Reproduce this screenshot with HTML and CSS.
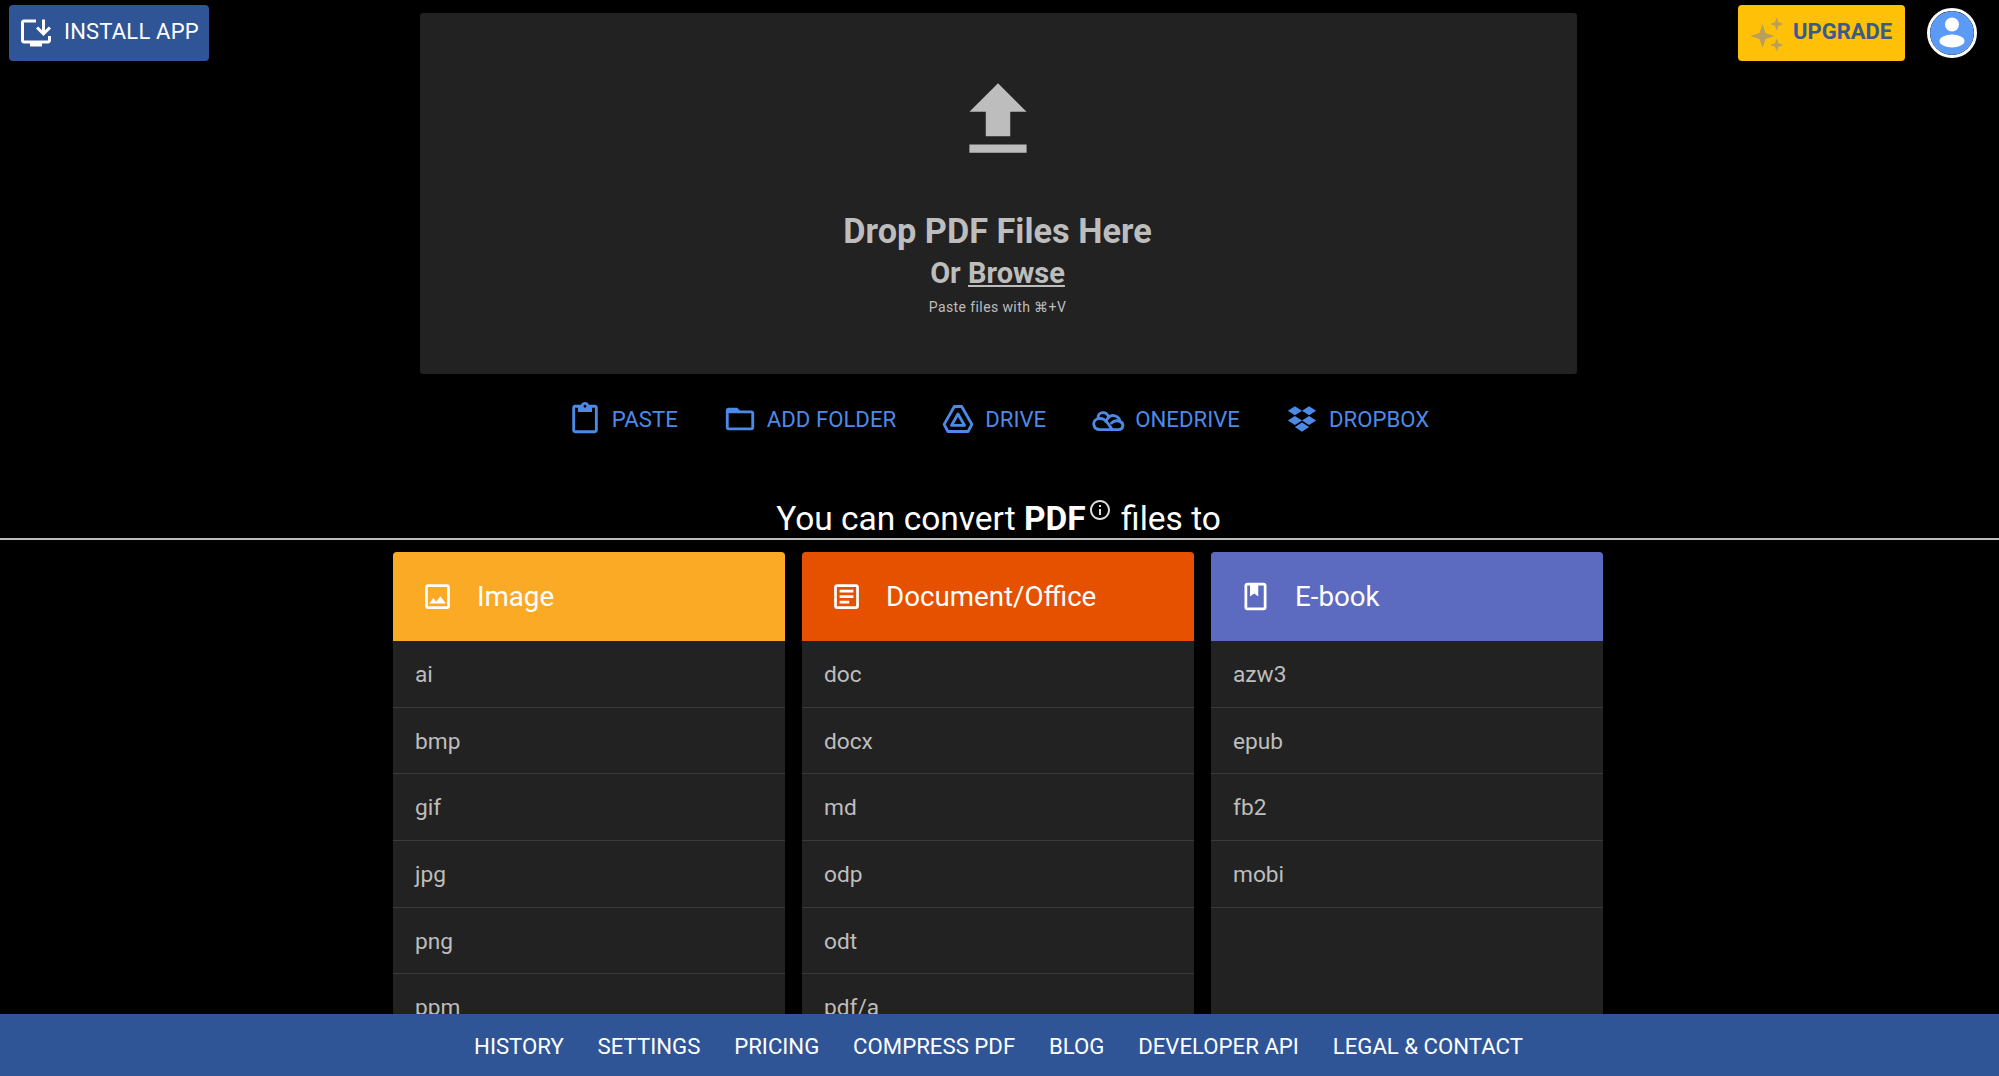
FILE: index.html
```html
<!DOCTYPE html>
<html lang="en">
<head>
    <meta charset="UTF-8">
    <meta name="viewport" content="width=device-width, initial-scale=1.0">
    <title>PDF Converter</title>
    <link rel="stylesheet" href="styles.css">
</head>
<body>
    <div class="top">
        <div class="top-left">
            <a class="btn install-btn">
                <svg class="btn-icon" viewBox="0 0 24 24"><path d="M20 17H4V5h8V3H4C2.89 3 2 3.89 2 5v12c0 1.1.89 2 2 2h4v2h8v-2h4c1.1 0 2-.9 2-2v-3h-2v3zM17 14l5-5-1.41-1.41L18 10.17V3h-2v7.17l-2.59-2.58L12 9l5 5z"/></svg>
                <span class="btn-label">INSTALL APP</span>
            </a>
        </div>
        <div class="dropzone">
            <svg class="upload-icon" viewBox="0 0 24 24"><path d="M9 16h6v-6h4l-7-7-7 7h4zm-4 2h14v2H5z"/></svg>
            <div class="drop-title">Drop PDF Files Here</div>
            <div class="drop-sub">Or <u>Browse</u></div>
            <div class="drop-hint">Paste files with ⌘+V</div>
        </div>
        <div class="top-right">
            <a class="btn upgrade-btn">
                <svg class="btn-icon spark" viewBox="0 0 24 24"><path d="M9 6l2 6 6 2-6 2-2 6-2-6-6-2 6-2zM18.500 1.500l1.200 3.300 3.300 1.200-3.300 1.200-1.200 3.300-1.200-3.300L14 6l3.300-1.200zM18.500 15.500l1.200 3.300 3.300 1.200-3.300 1.200-1.200 3.300-1.200-3.300L14 20l3.300-1.200z"/></svg>
                <span class="btn-label">UPGRADE</span>
            </a>
            <div class="avatar">
                <svg viewBox="0 0 44 44"><circle cx="22" cy="22" r="22" fill="#5b9bf5"/><circle cx="22" cy="13.500" r="7" fill="#fff"/><ellipse cx="22" cy="30" rx="12.500" ry="6.500" fill="#fff"/></svg>
            </div>
        </div>
    </div>

    <div class="sources">
        <a class="source">
            <svg viewBox="0 0 24 24"><path d="M19 2h-4.180C14.400.84 13.300 0 12 0c-1.300 0-2.400.84-2.820 2H5c-1.100 0-2 .9-2 2v16c0 1.100.9 2 2 2h14c1.100 0 2-.9 2-2V4c0-1.100-.9-2-2-2zm-7 0c.55 0 1 .45 1 1s-.45 1-1 1-1-.45-1-1 .45-1 1-1zm7 18H5V4h2v3h10V4h2v16z"/></svg>
            PASTE
        </a>
        <a class="source">
            <svg viewBox="0 0 24 24"><path d="M20 6h-8l-2-2H4c-1.100 0-1.990.9-1.990 2L2 18c0 1.100.9 2 2 2h16c1.100 0 2-.9 2-2V8c0-1.100-.9-2-2-2zm0 12H4V8h16v10z"/></svg>
            ADD FOLDER
        </a>
        <a class="source">
            <svg viewBox="0 0 24 24"><path class="line" d="M9.400 3.200h5.200L21.800 15.800l-2.700 5H4.900l-2.700-5zM12 8.500l-4.600 8h9.200z"/></svg>
            DRIVE
        </a>
        <a class="source">
            <svg viewBox="0 0 24 24"><path class="line" d="M6.500 19.500h13c3.200 0 4.200-4.600 1-5.700-.5-4-5.500-5.500-8-3C11 6 4.500 6.500 5 11.800c-4.500 1.200-4 7.700 1.500 7.700zM5 11.800c3-.6 5 .7 6.500 2.700l3.500 5M12.500 10.800c-1.200.9-1.700 2-2 3M20.500 13.800c-2.500-1-4.500-.5-6 1"/></svg>
            ONEDRIVE
        </a>
        <a class="source">
            <svg viewBox="0 0 24 24"><path d="M7 3l5 3.200-5 3.200-5-3.200zM17 3l5 3.200-5 3.200-5-3.200zM7 9.800L12 13l-5 3.200L2 13zM17 9.800l5 3.200-5 3.200-5-3.200zM12 14.500l5 3.200-5 3.300-5-3.300z"/></svg>
            DROPBOX
        </a>
    </div>

    <h2 class="convert-title">You can convert <b>PDF</b><svg class="info" viewBox="0 0 24 24"><path d="M11 7h2v2h-2zm0 4h2v6h-2zm1-9C6.480 2 2 6.480 2 12s4.480 10 10 10 10-4.480 10-10S17.520 2 12 2zm0 18c-4.410 0-8-3.590-8-8s3.590-8 8-8 8 3.590 8 8-3.590 8-8 8z"/></svg> files to</h2>

    <div class="columns">
        <div class="card">
            <div class="card-head head-image">
                <svg viewBox="0 0 24 24"><path d="M19 5v14H5V5h14m0-2H5c-1.100 0-2 .9-2 2v14c0 1.100.9 2 2 2h14c1.100 0 2-.9 2-2V5c0-1.100-.9-2-2-2zm-4.860 8.860l-3 3.870L9 13.140 6 17h12l-3.860-5.140z"/></svg>
                Image
            </div>
            <div class="row">ai</div>
            <div class="row">bmp</div>
            <div class="row">gif</div>
            <div class="row">jpg</div>
            <div class="row">png</div>
            <div class="row">ppm</div>
        </div>
        <div class="card">
            <div class="card-head head-doc">
                <svg viewBox="0 0 24 24"><path d="M19 5v14H5V5h14m0-2H5c-1.100 0-2 .9-2 2v14c0 1.100.9 2 2 2h14c1.100 0 2-.9 2-2V5c0-1.100-.9-2-2-2zM14 17H7v-2h7v2zm3-4H7v-2h10v2zm0-4H7V7h10v2z"/></svg>
                Document/Office
            </div>
            <div class="row">doc</div>
            <div class="row">docx</div>
            <div class="row">md</div>
            <div class="row">odp</div>
            <div class="row">odt</div>
            <div class="row">pdf/a</div>
        </div>
        <div class="card">
            <div class="card-head head-book">
                <svg viewBox="0 0 24 24"><path d="M18 2H6c-1.100 0-2 .9-2 2v16c0 1.100.9 2 2 2h12c1.100 0 2-.9 2-2V4c0-1.100-.9-2-2-2zm0 18H6V4h2v8l3-2.250L14 12V4h4v16z"/></svg>
                E-book
            </div>
            <div class="row">azw3</div>
            <div class="row">epub</div>
            <div class="row">fb2</div>
            <div class="row">mobi</div>
        </div>
    </div>

    <div class="bottom-bar">
        <a>HISTORY</a>
        <a>SETTINGS</a>
        <a>PRICING</a>
        <a>COMPRESS PDF</a>
        <a>BLOG</a>
        <a>DEVELOPER API</a>
        <a>LEGAL &amp; CONTACT</a>
    </div>
</body>
</html>
```
FILE: styles.css
```css
html, body {
    height: 100%;
}
body {
    margin: 0;
    overflow: hidden;
    background-color: #000;
    color: #fff;
    font-family: Roboto, "Liberation Sans", sans-serif;
}
.top {
    display: grid;
    grid-template-columns: 420px 1157px 1fr;
}
.top-left {
    padding: 5px 0 0 9px;
}
.top-right {
    display: flex;
    align-items: flex-start;
    padding: 5px 0 0 161px;
}
.btn {
    display: flex;
    align-items: center;
    height: 56px;
    box-sizing: border-box;
    border-radius: 4px;
    font-size: 22px;
    letter-spacing: 0.2px;
}
.btn-label {
    margin-bottom: 4px;
}
.btn-icon {
    width: 36px;
    height: 36px;
    fill: currentColor;
}
.install-btn {
    width: 200px;
    padding-left: 9px;
    gap: 10px;
    background-color: #2f5597;
    color: #fff;
}
.upgrade-btn {
    width: 167px;
    padding-left: 11px;
    gap: 8px;
    background-color: #ffc107;
    color: #3a5a8c;
    font-weight: 700;
    letter-spacing: 0;
}
.spark {
    fill: #b99f5c;
}
.avatar {
    width: 44px;
    height: 44px;
    margin: 3px 0 0 22px;
    border: 3px solid #fff;
    border-radius: 50%;
    overflow: hidden;
}
.avatar svg {
    display: block;
}
.dropzone {
    display: flex;
    flex-direction: column;
    align-items: center;
    height: 361px;
    margin-top: 13px;
    padding-right: 2px;
    background-color: #222;
    border-radius: 3px;
    color: #bdbdbd;
}
.upload-icon {
    width: 98px;
    height: 98px;
    margin-top: 58px;
    fill: currentColor;
}
.drop-title {
    margin-top: 42px;
    font-size: 34.300px;
    font-weight: 700;
    line-height: 40px;
}
.drop-sub {
    margin-top: 2px;
    font-size: 29px;
    font-weight: 700;
    line-height: 40px;
}
.drop-hint {
    margin-top: 4px;
    font-size: 14px;
    line-height: 20px;
    letter-spacing: 0.4px;
}
.sources {
    display: flex;
    justify-content: center;
    gap: 45px;
    margin-top: 25px;
    height: 40px;
    padding-right: 2px;
}
.source {
    display: flex;
    align-items: center;
    gap: 10px;
    color: #4d8ae8;
    font-size: 22.200px;
}
.source svg {
    width: 34px;
    height: 34px;
    fill: currentColor;
}
.source svg .line {
    fill: none;
    stroke: currentColor;
    stroke-width: 2;
    stroke-linejoin: round;
    stroke-linecap: round;
}
.convert-title {
    margin: 59px 0 0;
    padding: 0 2px 3px 0;
    border-bottom: 2px solid #bdbdbd;
    text-align: center;
    font-size: 33.500px;
    font-weight: 400;
    line-height: 32px;
}
.convert-title b {
    font-weight: 700;
}
.info {
    width: 24px;
    height: 24px;
    margin: 0 1px 0 2px;
    vertical-align: 8px;
    fill: #ddd;
}
.columns {
    display: flex;
    justify-content: center;
    gap: 17px;
    margin-top: 12px;
    height: 462px;
    padding-right: 3px;
}
.card {
    width: 392px;
    overflow: hidden;
    background-color: #222;
    border-radius: 4px 4px 0 0;
}
.card-head {
    display: flex;
    align-items: center;
    gap: 23px;
    height: 89px;
    padding-left: 28px;
    font-size: 27.700px;
}
.card-head svg {
    width: 33px;
    height: 33px;
    fill: currentColor;
}
.head-image {
    background-color: #fbaa26;
}
.head-doc {
    background-color: #e65100;
}
.head-book {
    background-color: #5c6bc0;
}
.row {
    display: flex;
    align-items: center;
    height: 66.700px;
    box-sizing: border-box;
    padding: 1px 0 0 22px;
    border-bottom: 1px solid #3a3a3a;
    color: #bdbdbd;
    font-size: 22.700px;
}
.bottom-bar {
    position: fixed;
    left: 0;
    right: 0;
    bottom: 0;
    display: flex;
    justify-content: center;
    align-items: center;
    gap: 33.800px;
    height: 62px;
    padding: 1px 2px 0 0;
    box-sizing: border-box;
    background-color: #2f5597;
    font-size: 22.200px;
}
```
